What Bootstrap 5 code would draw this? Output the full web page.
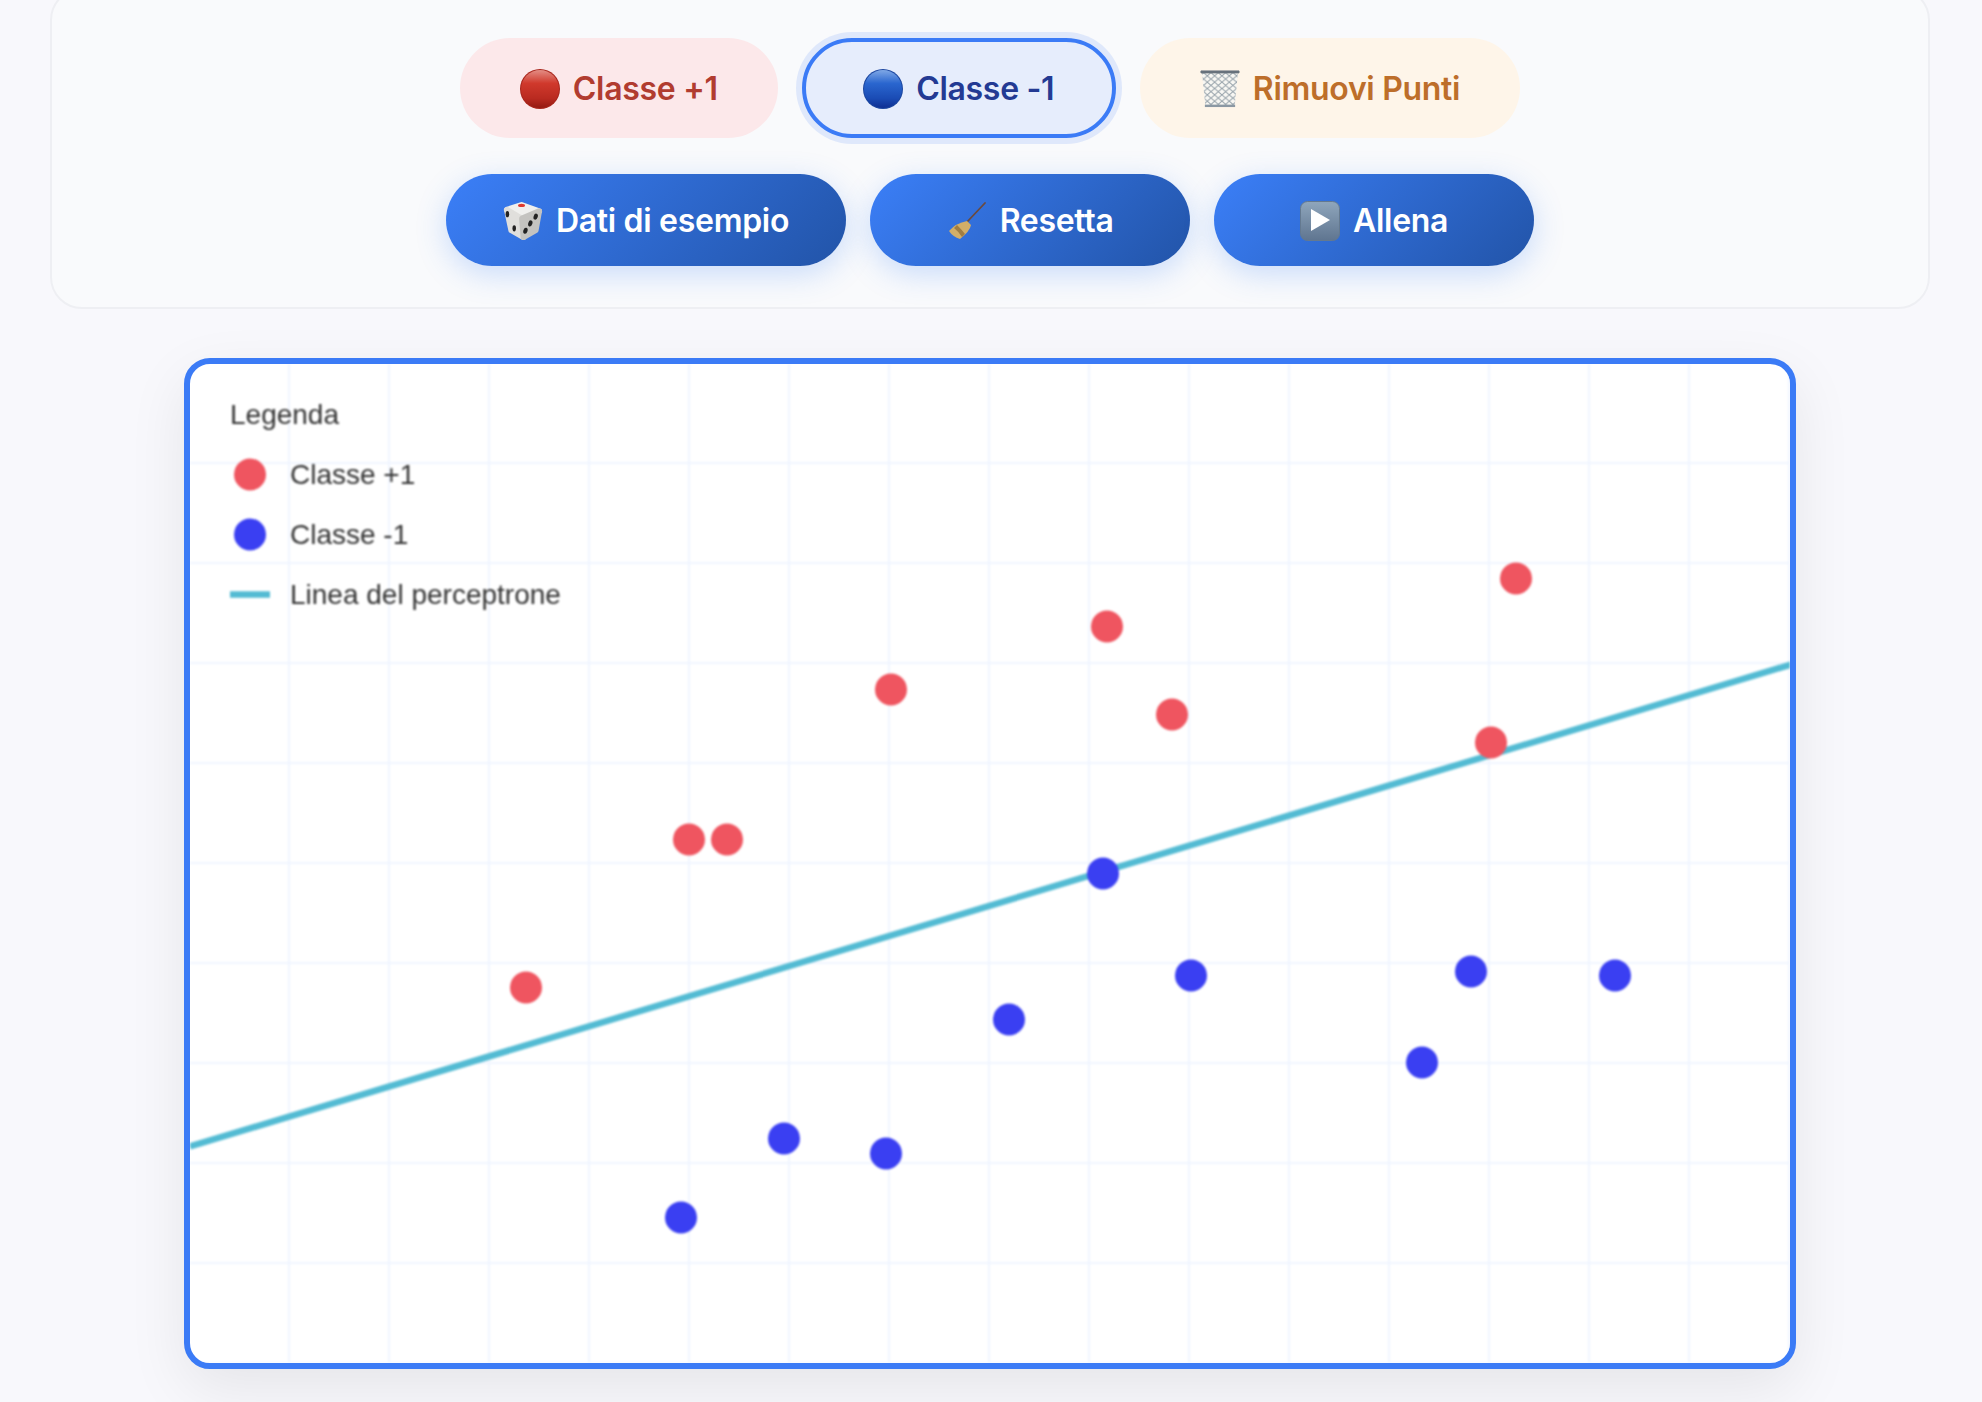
<!DOCTYPE html>
<html lang="it">
<head>
    <meta charset="UTF-8">
    <meta name="viewport" content="width=device-width, initial-scale=1.0">
    <title>Perceptron</title>
    <link href="https://cdn.jsdelivr.net/npm/bootstrap@5.3.2/dist/css/bootstrap.min.css" rel="stylesheet">
    <style>
        html, body { height: 100%; overflow: hidden; }
        body { background: #f8f8fc; font-family: Inter, "Liberation Sans", sans-serif; }
        .page-wrap { width: 1880px; margin-left: 50px; }
        .tools-panel {
            margin-top: -12px;
            padding: 48px 0 41px;
            background: #f9fafc;
            border: 2px solid #eeeff3;
            border-radius: 32px;
        }
        .tool-row { gap: 24px; }
        .tool-row + .tool-row { margin-top: 36px; }
        .tool-btn {
            display: inline-flex;
            align-items: center;
            justify-content: center;
            gap: 13px;
            font-size: 32px;
            font-weight: 600;
            letter-spacing: -.3px;
            line-height: 1;
            border: 0;
            border-radius: 50px;
        }
        .tool-btn svg { width: 40px; height: 40px; flex: none; }
        .mode-btn { height: 100px; padding: 2px 60px 0; }
        .mode-pos, .mode-pos:hover { background: #fce8ea; color: #b13c30; }
        .mode-neg, .mode-neg:hover {
            padding: 2px 57.5px 0;
            background: #e6edfc;
            color: #233a93;
            border: 4px solid #3b7bf6;
            box-shadow: 0 0 0 6px #dfe8fb;
        }
        .mode-del, .mode-del:hover { background: #fef5e9; color: #bd6e2a; }
        .action-btn, .action-btn:hover {
            min-width: 320px;
            height: 92px;
            padding: 2px 57px 0;
            color: #fff;
            background: linear-gradient(135deg, #3b7ff8, #2254a8);
            box-shadow: 0 8px 30px rgba(59, 130, 246, .25);
        }
        .plot-frame {
            width: 1612px;
            height: 1011px;
            margin: 49px 0 0 134px;
            background: #fff;
            border: 6px solid #3b7bf6;
            border-radius: 26px;
            overflow: hidden;
            box-shadow: 0 20px 60px rgba(0, 0, 0, .08);
        }
        .plot-svg { display: block; width: 1600px; height: 999px; filter: blur(1px); }
        .plot-svg text { font-family: "Liberation Sans", Arial, sans-serif; font-size: 28px; fill: #333; }
        .dot-pos { fill: #ef5560; }
        .dot-neg { fill: #3a3ff2; }
    </style>
</head>
<body>
<div class="page-wrap">

    <div class="tools-panel">
        <div class="tool-row d-flex justify-content-center">
            <button type="button" class="btn tool-btn mode-btn mode-pos">
                <svg viewBox="0 0 40 40">
                    <defs>
                        <linearGradient id="redBall" x1="0" y1="0" x2="0" y2="1">
                            <stop offset="0" stop-color="#e38d84"/>
                            <stop offset=".35" stop-color="#d0392c"/>
                            <stop offset=".75" stop-color="#b92a20"/>
                            <stop offset="1" stop-color="#931a12"/>
                        </linearGradient>
                    </defs>
                    <circle cx="20" cy="20" r="20" fill="#a8251b"/>
                    <circle cx="20" cy="20" r="19" fill="url(#redBall)"/>
                </svg>
                Classe +1
            </button>
            <button type="button" class="btn tool-btn mode-btn mode-neg">
                <svg viewBox="0 0 40 40">
                    <defs>
                        <linearGradient id="blueBall" x1="0" y1="0" x2="0" y2="1">
                            <stop offset="0" stop-color="#7fa8e6"/>
                            <stop offset=".35" stop-color="#2a66cf"/>
                            <stop offset=".75" stop-color="#1a4bb4"/>
                            <stop offset="1" stop-color="#0e2f92"/>
                        </linearGradient>
                    </defs>
                    <circle cx="20" cy="20" r="20" fill="#1b469f"/>
                    <circle cx="20" cy="20" r="19" fill="url(#blueBall)"/>
                </svg>
                Classe -1
            </button>
            <button type="button" class="btn tool-btn mode-btn mode-del">
                <svg viewBox="0 0 41 40">
                    <defs>
                        <pattern id="binMesh" width="7.500" height="6.500" patternUnits="userSpaceOnUse">
                            <path d="M0 0L7.500 6.500M7.500 0L0 6.500" stroke="#98a3ab" stroke-width="1"/>
                        </pattern>
                    </defs>
                    <path d="M2 2H39L35.500 38H5.500Z" fill="#f8f7f3"/>
                    <path d="M2 2H39L35.500 38H5.500Z" fill="url(#binMesh)"/>
                    <path d="M1 1.500H40V3.500H1Z" fill="#68727c" stroke="#68727c" stroke-linejoin="round"/>
                    <path d="M5 36H36V38.500H5Z" fill="#8b98a3"/>
                </svg>
                Rimuovi Punti
            </button>
        </div>

        <div class="tool-row d-flex justify-content-center">
            <button type="button" class="btn tool-btn action-btn">
                <svg viewBox="0 0 41 41">
                    <path d="M19 4L37 10.500L19 18L4 9Z" fill="#f0f0ee" stroke="#f0f0ee" stroke-width="6" stroke-linejoin="round"/>
                    <path d="M4 9L19 18L21 37L8.500 30Z" fill="#e0dfdc" stroke="#e0dfdc" stroke-width="6" stroke-linejoin="round"/>
                    <path d="M37 10.500L19.500 18L21 37L33.500 30Z" fill="#c4c3c0" stroke="#c4c3c0" stroke-width="6" stroke-linejoin="round"/>
                    <ellipse cx="19" cy="4.500" rx="3.600" ry="1.600" fill="#df3a30"/>
                    <ellipse cx="4.500" cy="13.500" rx="1.800" ry="3.200" fill="#222"/>
                    <ellipse cx="11.500" cy="28" rx="1.800" ry="3.200" fill="#222"/>
                    <ellipse cx="33.500" cy="16" rx="2.100" ry="3.200" transform="rotate(18 33.500 16)" fill="#222"/>
                    <ellipse cx="28" cy="23" rx="2.100" ry="3.200" transform="rotate(18 28 23)" fill="#222"/>
                    <ellipse cx="23" cy="30.500" rx="2.100" ry="3.200" transform="rotate(18 23 30.500)" fill="#222"/>
                </svg>
                Dati di esempio
            </button>
            <button type="button" class="btn tool-btn action-btn">
                <svg viewBox="0 0 40 40">
                    <path d="M38 2L20 21" stroke="#6b4a3e" stroke-width="1.800" stroke-linecap="round"/>
                    <path d="M20 20L24 24Q23 30 13 38Q6 36 2 30Q9 22 20 20Z" fill="#d2ae68"/>
                    <path d="M10 24Q15 29 18 33L15 36Q11 30 7 27Z" fill="#a07d42"/>
                </svg>
                Resetta
            </button>
            <button type="button" class="btn tool-btn action-btn">
                <svg viewBox="0 0 40 40">
                    <defs>
                        <linearGradient id="playBox" x1="0" y1="0" x2="0" y2="1">
                            <stop offset="0" stop-color="#8fa6bc"/>
                            <stop offset="1" stop-color="#5f7590"/>
                        </linearGradient>
                    </defs>
                    <rect x=".5" y=".5" width="39" height="39" rx="7" fill="url(#playBox)" stroke="#64798f"/>
                    <path d="M11 8L30 19L11 30Z" fill="#fff"/>
                </svg>
                Allena
            </button>
        </div>
    </div>

    <div class="plot-frame">
        <svg class="plot-svg" viewBox="0 0 1600 999">
            <defs>
                <pattern id="gridCell" width="100" height="100" patternUnits="userSpaceOnUse">
                    <path d="M100 0V100M0 100H100" fill="none" stroke="#f0f5ff" stroke-width="4"/>
                </pattern>
            </defs>
            <rect width="1600" height="999" fill="url(#gridCell)"/>

            <g transform="translate(1 1.500)">
                <path d="M-1 781L1600 299" stroke="#53bbd3" stroke-width="6.500"/>

                <g class="dot-pos">
                    <circle cx="335" cy="622" r="16"/>
                    <circle cx="498" cy="474" r="16"/>
                    <circle cx="536" cy="474" r="16"/>
                    <circle cx="700" cy="324" r="16"/>
                    <circle cx="916" cy="261" r="16"/>
                    <circle cx="981" cy="349" r="16"/>
                    <circle cx="1300" cy="377" r="16"/>
                    <circle cx="1325" cy="213" r="16"/>
                </g>
                <g class="dot-neg">
                    <circle cx="490" cy="852" r="16"/>
                    <circle cx="593" cy="773" r="16"/>
                    <circle cx="695" cy="788" r="16"/>
                    <circle cx="818" cy="654" r="16"/>
                    <circle cx="912" cy="508" r="16"/>
                    <circle cx="1000" cy="610" r="16"/>
                    <circle cx="1280" cy="606" r="16"/>
                    <circle cx="1424" cy="610" r="16"/>
                    <circle cx="1231" cy="697" r="16"/>
                </g>

                <!-- legenda -->
                <text x="39" y="58">Legenda</text>
                <circle class="dot-pos" cx="59" cy="109" r="16"/>
                <text x="99" y="118">Classe +1</text>
                <circle class="dot-neg" cx="59" cy="169" r="16"/>
                <text x="99" y="178">Classe -1</text>
                <path d="M39 229H79" stroke="#53bbd3" stroke-width="6.500"/>
                <text x="99" y="238">Linea del perceptrone</text>
            </g>
        </svg>
    </div>

</div>
<script src="https://cdn.jsdelivr.net/npm/bootstrap@5.3.2/dist/js/bootstrap.bundle.min.js"></script>
</body>
</html>
